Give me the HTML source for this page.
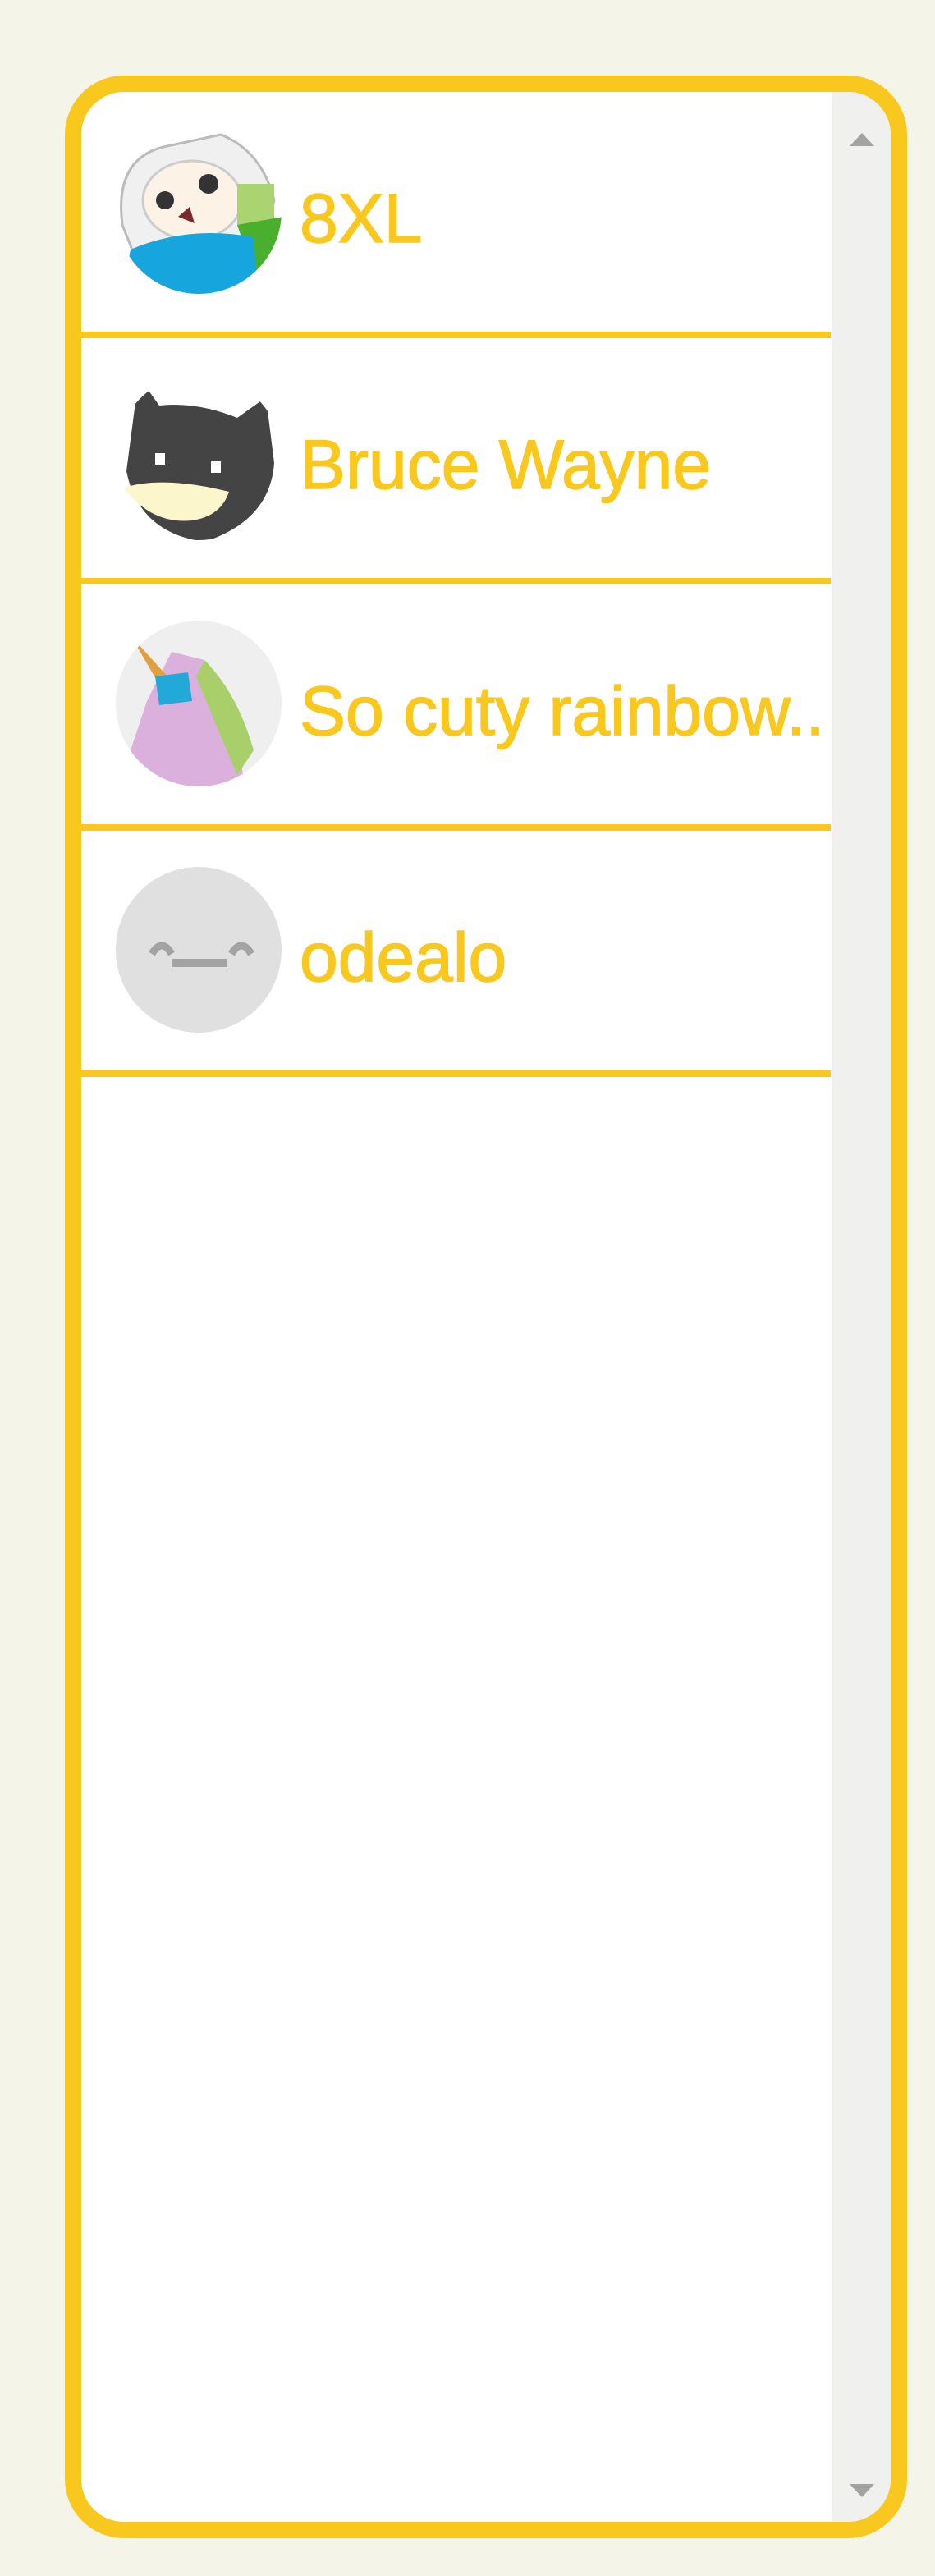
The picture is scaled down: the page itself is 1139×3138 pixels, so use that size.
<!DOCTYPE html>
<html><head><meta charset="utf-8"><style>
html,body{margin:0;padding:0;}
body{width:1139px;height:3138px;background:#f4f4e9;position:relative;overflow:hidden;font-family:"Liberation Sans",sans-serif;}
.box{position:absolute;left:79px;top:92px;width:986px;height:2960px;border:20px solid #f9c81e;border-radius:72px;background:#fff;overflow:hidden;}
.sb{position:absolute;right:0;top:0;width:71px;height:100%;background:#f0f0ef;}
.up{position:absolute;left:21px;top:50px;width:0;height:0;border-left:15px solid transparent;border-right:15px solid transparent;border-bottom:16px solid #a3a3a3;}
.dn{position:absolute;left:21px;bottom:30px;width:0;height:0;border-left:15px solid transparent;border-right:15px solid transparent;border-top:16px solid #a3a3a3;}
.row{position:absolute;left:0;width:913px;height:292px;border-bottom:8px solid #f9c81e;}
.av{position:absolute;left:40px;top:42px;width:206px;height:206px;}
.name{position:absolute;left:266px;top:106px;font-size:84px;line-height:96px;color:#f9c81e;white-space:nowrap;overflow:hidden;width:647px;letter-spacing:0px;-webkit-text-stroke:1.5px #f9c81e;}
</style></head><body>
<div class="box">
 <div class="row" style="top:0">
  <svg class="av" viewBox="0 0 206 206"><defs><clipPath id="c1"><circle cx="103" cy="103" r="101"/></clipPath></defs>
   <g clip-path="url(#c1)">
    <rect width="206" height="206" fill="#fff"/>
    <path d="M10 120 Q0 40 60 25 L130 10 Q180 30 195 90 L180 150 L30 170Z" fill="#f0f0f0" stroke="#bbb" stroke-width="3"/>
    <ellipse cx="95" cy="90" rx="60" ry="48" fill="#fdf2e6" stroke="#ccc" stroke-width="3"/>
    <circle cx="62" cy="90" r="11" fill="#333"/><circle cx="115" cy="70" r="12" fill="#333"/>
    <path d="M78 110 L92 98 L98 118Z" fill="#7a2a2a"/>
    <rect x="150" y="70" width="45" height="50" fill="#a9d470"/>
    <path d="M150 120 L206 110 L206 170 L170 180Z" fill="#4aaf2d"/>
    <path d="M20 150 Q90 120 170 135 L175 206 L10 206Z" fill="#16a6dd"/>
   </g></svg>
  <div class="name">8XL</div>
 </div>
 <div class="row" style="top:300px">
  <svg class="av" viewBox="0 0 206 206"><defs><clipPath id="c2"><circle cx="103" cy="103" r="101"/></clipPath></defs>
   <g clip-path="url(#c2)">
    <rect width="206" height="206" fill="#fff"/>
    <path d="M15 120 L30 5 L55 40 Q100 35 150 55 L185 30 L195 110 Q190 180 110 206 Q30 195 15 120Z" fill="#444"/>
    <path d="M12 140 Q60 125 140 145 Q130 175 95 180 Q45 185 12 140Z" fill="#fbf6cc"/>
    <rect x="50" y="98" width="12" height="14" fill="#fff"/><rect x="118" y="108" width="12" height="14" fill="#fff"/>
   </g></svg>
  <div class="name">Bruce Wayne</div>
 </div>
 <div class="row" style="top:600px">
  <svg class="av" viewBox="0 0 206 206"><defs><clipPath id="c3"><circle cx="103" cy="103" r="101"/></clipPath></defs>
   <g clip-path="url(#c3)">
    <rect width="206" height="206" fill="#efefef"/>
    <path d="M40 100 L70 40 L110 50 L150 150 L160 206 L30 206 L20 160Z" fill="#dcb0dc"/>
    <path d="M110 50 Q150 90 170 160 L150 190 Q120 120 100 70Z" fill="#a8cf6a"/>
    <path d="M20 20 L65 70 L55 80Z" fill="#e0a040"/>
    <path d="M50 70 L90 65 L95 100 L55 105Z" fill="#23a9d8"/>
   </g></svg>
  <div class="name">So cuty rainbow..</div>
 </div>
 <div class="row" style="top:900px">
  <svg class="av" viewBox="0 0 206 206">
   <circle cx="103" cy="103" r="101" fill="#e0e0e0"/>
   <path d="M46 108 Q58 88 70 108 M143 108 Q155 88 167 108" fill="none" stroke="#a3a3a3" stroke-width="9"/>
   <rect x="70" y="114" width="68" height="10" fill="#a3a3a3"/>
  </svg>
  <div class="name">odealo</div>
 </div>
 <div class="sb"><div class="up"></div><div class="dn"></div></div>
</div>
</body></html>
